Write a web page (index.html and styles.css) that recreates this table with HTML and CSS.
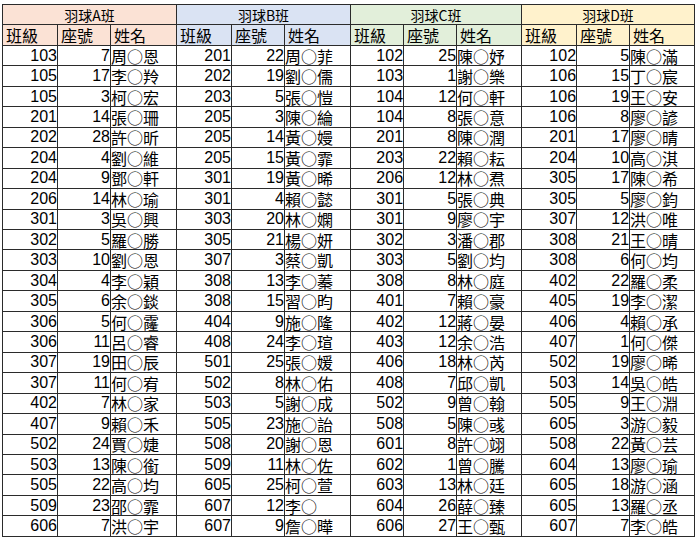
FILE: index.html
```html
<!DOCTYPE html>
<html lang="zh-Hant">
<head>
<meta charset="utf-8">
<title>羽球班名單</title>
<link rel="stylesheet" href="styles.css">
</head>
<body>
<table class="sheet">
<colgroup>
<col class="c-cls"><col class="c-seat"><col class="c-name">
<col class="c-cls"><col class="c-seat"><col class="c-name">
<col class="c-cls2"><col class="c-seat"><col class="c-name2">
<col class="c-cls"><col class="c-seat"><col class="c-name2">
</colgroup>
<thead>
<tr class="title-row">
<th colspan="3" class="ga">羽球A班</th>
<th colspan="3" class="gb">羽球B班</th>
<th colspan="3" class="gc">羽球C班</th>
<th colspan="3" class="gd">羽球D班</th>
</tr>
<tr class="head-row">
<th class="ga">班級</th><th class="ga">座號</th><th class="ga">姓名</th>
<th class="gb">班級</th><th class="gb">座號</th><th class="gb">姓名</th>
<th class="gc">班級</th><th class="gc">座號</th><th class="gc">姓名</th>
<th class="gd">班級</th><th class="gd">座號</th><th class="gd">姓名</th>
</tr>
</thead>
<tbody id="rows"></tbody>
</table>
<script src="script.js"></script>
</body>
</html>
```

FILE: script.js
```js
const A = [
["103",7,"周○恩"],["105",17,"李○羚"],["105",3,"柯○宏"],["201",14,"張○珊"],["202",28,"許○昕"],["204",4,"劉○維"],["204",9,"鄧○軒"],["206",14,"林○瑜"],["301",3,"吳○興"],["302",5,"羅○勝"],["303",10,"劉○恩"],["304",4,"李○穎"],["305",6,"余○錟"],["306",5,"何○霳"],["306",11,"呂○睿"],["307",19,"田○辰"],["307",11,"何○宥"],["402",7,"林○家"],["407",9,"賴○禾"],["502",24,"賈○婕"],["503",13,"陳○銜"],["505",22,"高○均"],["509",23,"邵○霏"],["606",7,"洪○宇"]];
const B = [
["201",22,"周○菲"],["202",19,"劉○儒"],["203",5,"張○愷"],["205",3,"陳○綸"],["205",14,"黃○嫚"],["205",15,"黃○霏"],["301",19,"黃○晞"],["301",4,"賴○懿"],["303",20,"林○嫻"],["305",21,"楊○妍"],["307",3,"蔡○凱"],["308",13,"李○蓁"],["308",15,"習○昀"],["404",9,"施○隆"],["408",24,"李○瑄"],["501",25,"張○媛"],["502",8,"林○佑"],["503",5,"謝○成"],["505",23,"施○詒"],["508",20,"謝○恩"],["509",11,"林○佐"],["605",25,"柯○萱"],["607",12,"李○"],["607",9,"詹○曄"]];
const C = [
["102",25,"陳○妤"],["103",1,"謝○樂"],["104",12,"何○軒"],["104",8,"張○意"],["201",8,"陳○潤"],["203",22,"賴○耘"],["206",12,"林○焄"],["301",5,"張○典"],["301",9,"廖○宇"],["302",3,"潘○郡"],["303",5,"劉○均"],["308",8,"林○庭"],["401",7,"賴○豪"],["402",12,"蔣○晏"],["403",12,"余○浩"],["406",18,"林○芮"],["408",7,"邱○凱"],["502",9,"曾○翰"],["508",5,"陳○彧"],["601",8,"許○翊"],["602",1,"曾○騰"],["603",13,"林○廷"],["604",26,"薛○臻"],["606",27,"王○甄"]];
const D = [
["102",5,"陳○滿"],["106",15,"丁○宸"],["106",19,"王○安"],["106",8,"廖○諺"],["201",17,"廖○晴"],["204",10,"高○淇"],["305",17,"陳○希"],["305",5,"廖○鈞"],["307",12,"洪○唯"],["308",21,"王○晴"],["308",6,"何○均"],["402",22,"羅○柔"],["405",19,"李○潔"],["406",4,"賴○承"],["407",1,"何○傑"],["502",19,"廖○晞"],["503",14,"吳○皓"],["505",9,"王○淵"],["605",3,"游○毅"],["508",22,"黃○芸"],["604",13,"廖○瑜"],["605",18,"游○涵"],["605",13,"羅○丞"],["607",7,"李○皓"]];
const body = document.getElementById("rows");
for (let i = 0; i < 24; i++) {
  const tr = document.createElement("tr");
  [A, B, C, D].forEach(g => {
    const r = g[i];
    const a = document.createElement("td"); a.className = "num"; a.textContent = r[0];
    const b = document.createElement("td"); b.className = "num"; b.textContent = r[1];
    const c = document.createElement("td"); c.className = "name"; c.textContent = r[2];
    tr.append(a, b, c);
  });
  body.appendChild(tr);
}
```

FILE: styles.css
```css
html, body {
  margin: 0;
  padding: 0;
  background: #ffffff;
}
body {
  padding: 4px 0 0 2px;
  font-family: "Noto Sans CJK TC", "Noto Sans", sans-serif;
  color: #000;
}
.sheet {
  border-collapse: collapse;
  table-layout: fixed;
  width: 693px;
}
.c-cls { width: 55px; }
.c-seat { width: 53px; }
.c-name { width: 66px; }
.c-cls2 { width: 53px; }
.c-name2 { width: 65px; }
.sheet tr {
  height: 20.46px;
}
.sheet th,
.sheet td {
  border: 1px solid #2b2b2b;
  padding: 0;
  font-size: 16px;
  line-height: 18px;
  white-space: nowrap;
  font-weight: normal;
  vertical-align: middle;
}
.title-row th {
  text-align: center;
  font-size: 14px;
}
.head-row th {
  text-align: left;
  padding-left: 3px;
}
.ga { background: #fbe2d5; }
.gb { background: #dae3f3; }
.gc { background: #e2efda; }
.gd { background: #fff2cc; }
.num {
  text-align: right;
  padding-right: 2px;
  font-family: "Liberation Sans", Arial, sans-serif;
  font-size: 17px;
}
.name {
  text-align: left;
  padding-left: 3px;
}
```
